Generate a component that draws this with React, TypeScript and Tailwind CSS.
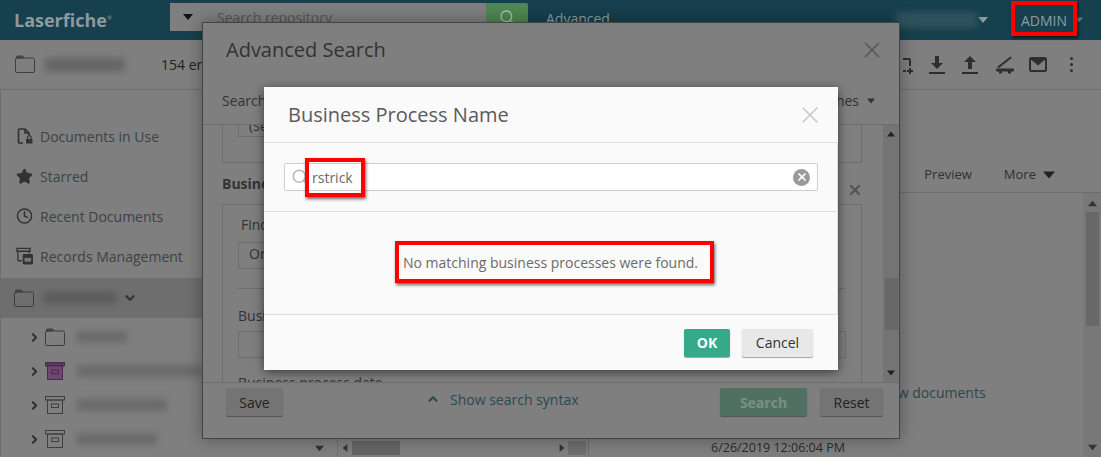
import { ChevronDown, ChevronRight, ChevronUp, Clock, Search, Star, X } from "lucide-react";

const FONT = "font-['Open_Sans','Noto_Sans',sans-serif]";

function Tri({ dir, className }: { dir: "up" | "down" | "left" | "right"; className: string }) {
  const points = {
    up: "0,8 5,2 10,8",
    down: "0,2 10,2 5,8",
    left: "8,0 8,10 2,5",
    right: "2,0 2,10 8,5",
  }[dir];
  return (
    <svg viewBox="0 0 10 10" className={className}>
      <polygon points={points} fill="currentColor" />
    </svg>
  );
}

function FolderIcon({ className }: { className: string }) {
  return (
    <svg viewBox="0 0 20 18" className={className} fill="none" stroke="#3f3f3f" strokeWidth="1">
      <path d="M1.5 4V2a1 1 0 0 1 1-1h5l1.5 2" fill="#4a4a4a" />
      <rect x="0.5" y="3" width="19" height="14.5" rx="1.5" />
    </svg>
  );
}

function BoxIcon({ purple }: { purple?: boolean }) {
  return (
    <svg viewBox="0 0 20 18" className="w-[20px] h-[18px] shrink-0" fill="none" stroke={purple ? "#4d2a4f" : "#3f3f3f"}>
      <rect x="0.5" y="0.5" width="19" height="3.5" fill={purple ? "#5a3560" : "none"} />
      <rect x="2.5" y="4" width="15" height="13.5" fill={purple ? "#6e4672" : "none"} />
      <rect x="6.5" y="8" width="7" height="3.5" />
    </svg>
  );
}

function SideItem({ icon, label }: { icon: React.ReactNode; label: string }) {
  return (
    <div className="h-10 flex items-center pl-[15px] gap-[7px] text-[14px] text-[#3a4347] shrink-0">
      <span className="w-[17px] flex justify-center">{icon}</span>
      {label}
    </div>
  );
}

function TreeRow({ icon, blur }: { icon: React.ReactNode; blur: string }) {
  return (
    <div className="h-[34px] flex items-center pl-[27px] gap-[4px] shrink-0">
      <ChevronRight size={13} strokeWidth={4} className="text-[#333] shrink-0" />
      {icon}
      <div className={`h-[12px] ml-[8px] bg-[#6b6b6b] blur-[3px] shrink-0 ${blur}`} />
    </div>
  );
}

function GreyButton({ label, className }: { label: string; className: string }) {
  return (
    <div className={`h-[28px] rounded-[2px] flex items-center justify-center text-[14px] shadow-[0_1px_1px_rgba(0,0,0,0.35)] ${className}`}>
      {label}
    </div>
  );
}

function Background() {
  return (
    <div className="flex flex-col h-full">
      {/* top bar */}
      <div className="h-10 bg-[#16404d] flex items-center shrink-0">
        <span className="ml-[14px] w-[156px] text-[18px] font-bold text-[#8c9a9e]">
          Laserfiche<span className="text-[6px] align-super font-normal">®</span>
        </span>
        <div className="w-[36px] h-[28px] -mt-[6px] bg-[#7f7f7f] flex items-center justify-center">
          <Tri dir="down" className="w-[10px] h-[10px] text-[#111]" />
        </div>
        <div className="w-[280px] h-[28px] -mt-[6px] bg-[#7f7f7f] pl-[11px] text-[14px] leading-[30px] text-[#555]">Search repository</div>
        <div className="w-[42px] h-[28px] -mt-[6px] bg-[#4f8752] rounded-r-[2px] flex items-center justify-center">
          <Search size={16} className="text-[#a9c0aa]" />
        </div>
        <span className="ml-[18px] text-[14px] text-[#8c9ea5] -mt-[3px]">Advanced</span>
        <div className="ml-[286px] w-[81px] h-[16px] bg-[#2f525d] blur-[3px]" />
        <Tri dir="down" className="ml-[1px] w-[10px] h-[10px] text-[#8c9ea5]" />
        <span className="ml-[33px] text-[14px] text-[#8c9ea5]">ADMIN</span>
        <Tri dir="down" className="ml-[8px] w-[8px] h-[8px] text-[#5d7c86]" />
      </div>
      {/* toolbar */}
      <div className="h-[50px] border-b border-[#6d6d6d] flex items-center shrink-0 text-[#2e2e2e]">
        <FolderIcon className="ml-[15px] w-[20px] h-[18px] -mt-[2px]" />
        <div className="ml-[10px] w-[80px] h-[14px] bg-[#666] blur-[3px]" />
        <span className="ml-[36px] text-[14px] text-[#222]">154 entries</span>
        <svg viewBox="0 0 16 16" className="ml-[663px] w-[16px] h-[16px] mt-[2px]" fill="none" stroke="#2e2e2e" strokeWidth="2">
          <path d="M6 1h6a1 1 0 0 1 1 1v6M6 13h3M13 10v6M10 13h6" />
        </svg>
        <svg viewBox="0 0 16 18" className="ml-[16px] w-[16px] h-[18px]" fill="#2e2e2e">
          <path d="M6 0h4v7h4l-6 6-6-6h4zM0 16h16v2H0z" />
        </svg>
        <svg viewBox="0 0 16 18" className="ml-[17px] w-[16px] h-[18px]" fill="#2e2e2e">
          <path d="M8 0l6 6h-4v7H6V6H2zM0 16h16v2H0z" />
        </svg>
        <svg viewBox="0 0 18 18" className="ml-[18px] w-[18px] h-[18px]" fill="#2e2e2e">
          <path d="M1 11L14.500 0.500l1.200 1.600L3 12zM1 12.500h16a1 1 0 0 1 1 1v1a1 1 0 0 1-1 1h-2v2h-3v-2H6v2H3v-2H1a1 1 0 0 1-1-1v-1a1 1 0 0 1 1-1z" />
        </svg>
        <svg viewBox="0 0 18 15" className="ml-[15px] w-[18px] h-[15px]" fill="#2e2e2e" stroke="#2e2e2e">
          <rect x="1" y="1" width="16" height="13" rx="1.500" fill="none" strokeWidth="2" />
          <polygon points="2,2 16,2 9,8" strokeWidth="1" />
        </svg>
        <div className="ml-[23px] flex flex-col gap-[3px]">
          <div className="w-[3px] h-[3px] rounded-full bg-[#2e2e2e]" />
          <div className="w-[3px] h-[3px] rounded-full bg-[#2e2e2e]" />
          <div className="w-[3px] h-[3px] rounded-full bg-[#2e2e2e]" />
        </div>
      </div>
      {/* body */}
      <div className="flex flex-1 min-h-0">
        <div className="relative w-[334px] pt-[26px] flex flex-col border-l border-[#6d6d6d] overflow-hidden shrink-0">
          <SideItem
            label="Documents in Use"
            icon={
              <svg viewBox="0 0 16 16" className="w-[16px] h-[16px]" fill="none" stroke="#333" strokeWidth="1.700">
                <path d="M6 15H2.500a1 1 0 0 1-1-1V2a1 1 0 0 1 1-1H8l4 4v2M8 1v4h4" />
                <rect x="9" y="11" width="6.500" height="4.500" rx="0.500" fill="#333" stroke="none" />
                <path d="M10.500 11V9.500a1.800 1.800 0 0 1 3.600 0V11" strokeWidth="1.200" />
              </svg>
            }
          />
          <SideItem label="Starred" icon={<Star size={19} fill="#333" className="text-[#333]" />} />
          <SideItem label="Recent Documents" icon={<Clock size={18} strokeWidth={2.200} className="text-[#333]" />} />
          <SideItem
            label="Records Management"
            icon={
              <svg viewBox="0 0 18 18" className="w-[18px] h-[18px]" fill="none" stroke="#333" strokeWidth="1.400">
                <path d="M1 1h14v3H1zM2 4v9a1 1 0 0 0 1 1h3M14 4v2" />
                <rect x="7" y="7" width="11" height="11" rx="1.500" fill="#333" stroke="none" />
                <rect x="9" y="11" width="7" height="4" fill="#777" stroke="none" />
              </svg>
            }
          />
          <div className="h-10 mt-[2px] bg-[#6e6e6e] flex items-center pl-[13px] shrink-0">
            <FolderIcon className="w-[20px] h-[18px]" />
            <div className="ml-[10px] w-[72px] h-[12px] bg-[#5c5c5c] blur-[3px]" />
            <ChevronDown size={14} strokeWidth={4} className="ml-[7px] text-[#333]" />
          </div>
          <div className="h-[2px] shrink-0" />
          <TreeRow icon={<FolderIcon className="w-[20px] h-[18px] shrink-0" />} blur="w-[50px]" />
          <TreeRow icon={<BoxIcon purple />} blur="w-[125px]" />
          <TreeRow icon={<BoxIcon />} blur="w-[90px]" />
          <TreeRow icon={<BoxIcon />} blur="w-[80px]" />
          <Tri dir="down" className="absolute left-[314px] bottom-[4px] w-[9px] h-[9px] text-[#333]" />
        </div>
        <div className="flex-1 flex flex-col min-w-0">
          <div className="h-[103px] border-b border-[#6d6d6d] flex items-end justify-end pb-[8px] pr-[46px] text-[13px] text-[#2c3236] shrink-0">
            <span>Preview</span>
            <span className="ml-[32px]">More</span>
            <Tri dir="down" className="ml-[7px] mb-[3px] w-[12px] h-[12px] text-[#222]" />
          </div>
          <div className="flex-1 flex min-h-0">
            <div className="flex-1 flex flex-col min-w-0">
              <div className="flex-1 pl-[544px] pt-[189px] text-[14px] text-[#2c4650]">View documents</div>
              <div className="h-[18px] flex items-center text-[#333] shrink-0">
                <div className="ml-[3px] h-full border-l border-[#6d6d6d]" />
                <Tri dir="left" className="ml-[3px] w-[8px] h-[8px]" />
                <div className="ml-[3px] w-[48px] h-[14px] bg-[#666]" />
                <Tri dir="right" className="ml-[158px] w-[8px] h-[8px]" />
                <div className="ml-[2px] w-[18px] h-[14px] bg-[#6e6e6e]" />
                <div className="ml-[2px] h-full border-l border-[#6d6d6d]" />
                <span className="ml-[122px] mt-[1px] text-[12.500px] text-[#2a2a2a] whitespace-nowrap">6/26/2019 12:06:04 PM</span>
              </div>
            </div>
            <div className="w-[18px] bg-[#787878] flex flex-col items-center justify-between pt-[6px] pb-[5px]">
              <div className="flex flex-col items-center w-full">
                <Tri dir="up" className="w-[9px] h-[9px] text-[#333]" />
                <div className="mt-[4px] w-[13px] h-[114px] bg-[#686868]" />
              </div>
              <Tri dir="down" className="w-[9px] h-[9px] text-[#333]" />
            </div>
          </div>
        </div>
      </div>
    </div>
  );
}

function AdvancedSearch() {
  return (
    <div className="absolute left-[202px] top-[22px] w-[698px] h-[417px] bg-[#7f7f7f] border border-[#444] shadow-[0_0_16px_rgba(0,0,0,0.35)] flex flex-col">
      <div className="h-[54px] flex items-center justify-between pl-[23px] pr-[14px] shrink-0">
        <span className="text-[20px] font-medium text-[#333]">Advanced Search</span>
        <X size={26} strokeWidth={1.700} className="text-[#5e5e5e]" />
      </div>
      <div className="h-[48px] border-b border-[#6d6d6d] flex items-center justify-between pl-[19px] pr-[24px] text-[14px] text-[#333] shrink-0">
        <span>Search in</span>
        <span className="flex items-center gap-[8px]">
          Saved searches
          <Tri dir="down" className="w-[8px] h-[8px] text-[#333]" />
        </span>
      </div>
      <div className="flex-1 flex min-h-0">
        <div className="flex-1 pl-[19px] pr-[21px] overflow-hidden text-[14px] text-[#333]">
          <div className="h-[38px] border border-t-0 border-[#6d6d6d] pl-[15px]">
            <div className="w-[100px] h-[12px] border border-t-0 border-[#6d6d6d] pl-[10px] text-[13px] leading-[2px]">(Select)</div>
          </div>
          <div className="h-[41px] flex items-center justify-between">
            <span className="font-bold">Business Process</span>
            <X size={16} strokeWidth={3.500} className="text-[#555] -mr-[1px] mt-[12px]" />
          </div>
          <div className="border border-b-0 border-[#6d6d6d] px-[15px] h-[200px] pt-[9px]">
            <div className="pl-[3px]">Find</div>
            <div className="mt-[7px] w-[200px] h-[27px] border border-[#6d6d6d] pl-[10px]">Or</div>
            <div className="mt-[19px] border-t border-[#6d6d6d] pt-[16px]">Business process name</div>
            <div className="mt-[5px] h-[27px] border border-[#6d6d6d]" />
            <div className="mt-[14px]">Business process date</div>
          </div>
        </div>
        <div className="w-[16px] bg-[#747474] flex flex-col items-center justify-between py-[5px]">
          <div className="flex flex-col items-center w-full">
            <Tri dir="up" className="w-[8px] h-[8px] text-[#222]" />
          </div>
          <div className="w-[13px] h-[52px] bg-[#676767] mt-[140px]" />
          <Tri dir="down" className="mt-auto w-[8px] h-[8px] text-[#222]" />
        </div>
      </div>
      <div className="h-[56px] border-t border-[#6d6d6d] pt-[5px] flex items-start pl-[23px] pr-[16px] shrink-0">
        <GreyButton label="Save" className="w-[57px] bg-[#747474] text-[#222]" />
        <div className="flex items-center h-[28px] pb-[6px]">
          <ChevronUp size={14} strokeWidth={4} className="ml-[143px] text-[#2a4a55]" />
          <span className="ml-[10px] text-[14px] text-[#2a4a55]">Show search syntax</span>
        </div>
        <GreyButton label="Search" className="ml-auto w-[87px] bg-[#507162] text-[#7d8f86] font-bold" />
        <GreyButton label="Reset" className="ml-[13px] w-[63px] bg-[#747474] text-[#222]" />
      </div>
    </div>
  );
}

function BusinessProcessModal() {
  return (
    <div className="absolute left-[264px] top-[87px] w-[574px] h-[283px] bg-[#fafafa] shadow-[0_2px_10px_rgba(0,0,0,0.55)] flex flex-col">
      <div className="h-[56px] border-b border-[#dedede] flex items-center justify-between pl-[24px] pr-[14px] shrink-0">
        <span className="mt-[1px] text-[20px] font-medium text-[#5a5a5a]">Business Process Name</span>
        <X size={28} strokeWidth={1.300} className="text-[#c9c9c9]" />
      </div>
      <div className="h-[69px] border-b border-r border-[#dedede] flex items-center pl-[20px] pr-[19px] shrink-0">
        <div className="w-full h-[28px] bg-white border border-[#cfcfcf] rounded-[2px] flex items-center">
          <Search size={18} className="ml-[6px] text-[#b9b9b9]" />
          <span className="ml-[3px] flex-1 text-[14px] text-[#6a6a6a]">rstrick</span>
          <div className="mr-[7px] w-[17px] h-[17px] rounded-full bg-[#9a9a9a] flex items-center justify-center">
            <X size={12} strokeWidth={3.500} className="text-white" />
          </div>
        </div>
      </div>
      <div className="h-[103px] border-b border-r border-[#dedede] pb-[2px] flex items-center justify-center text-[14px] text-[#6b6b6b] shrink-0">
        No matching business processes were found.
      </div>
      <div className="flex-1 flex items-center justify-end gap-[12px] pr-[25px]">
        <GreyButton label="OK" className="w-[46px] bg-[#36a98a] text-white font-bold" />
        <GreyButton label="Cancel" className="w-[71px] bg-[#e8e8e8] text-[#333]" />
      </div>
    </div>
  );
}

export default function App() {
  return (
    <div className={`relative w-[1101px] h-[457px] overflow-hidden bg-[#7f7f7f] ${FONT}`}>
      <Background />
      <AdvancedSearch />
      <BusinessProcessModal />
      {/* red annotation boxes */}
      <div className="absolute left-[1011px] top-[1px] w-[66px] h-[35px] border-[4px] border-[#ff0000] shadow-[1px_2px_3px_rgba(0,0,0,0.6)]" />
      <div className="absolute left-[305px] top-[158px] w-[60px] h-[39px] border-[4px] border-[#ff0000] shadow-[1px_2px_3px_rgba(0,0,0,0.6)]" />
      <div className="absolute left-[395px] top-[241px] w-[319px] h-[42px] border-[4px] border-[#ff0000] shadow-[1px_2px_3px_rgba(0,0,0,0.6)]" />
    </div>
  );
}
